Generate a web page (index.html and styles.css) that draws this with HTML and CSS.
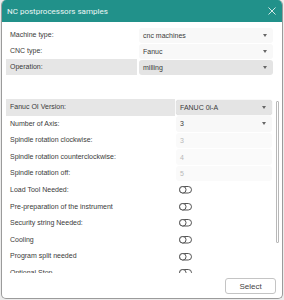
FILE: index.html
```html
<!DOCTYPE html>
<html lang="en">
<head>
    <meta charset="UTF-8">
    <meta name="viewport" content="width=device-width, initial-scale=1.0">
    <title>NC postprocessors samples</title>
    <link rel="stylesheet" href="styles.css">
</head>
<body>
    <div class="dialog">
        <div class="titlebar">
            <span class="title">NC postprocessors samples</span>
            <svg class="close" width="8" height="8" viewBox="0 0 8 8">
                <path d="M0.5 0.5 L7.5 7.5 M7.5 0.5 L0.5 7.5" stroke="#e6f3f1" stroke-width="0.9" fill="none"/>
            </svg>
        </div>

        <div class="content">
            <div class="main-form">
                <div class="label">Machine type:</div>
                <div class="select"><span>cnc machines</span><i class="caret"></i></div>

                <div class="label">CNC type:</div>
                <div class="select"><span>Fanuc</span><i class="caret"></i></div>

                <div class="label active">Operation:</div>
                <div class="select active"><span>milling</span><i class="caret"></i></div>
            </div>

            <div class="params">
                <div class="params-list">
                    <div class="label active">Fanuc OI Version:</div>
                    <div class="select active raised"><span>FANUC 0i-A</span><i class="caret"></i></div>

                    <div class="label">Number of Axis:</div>
                    <div class="select"><span>3</span><i class="caret"></i></div>

                    <div class="label">Spindle rotation clockwise:</div>
                    <div class="select disabled"><span>3</span></div>

                    <div class="label">Spindle rotation counterclockwise:</div>
                    <div class="select disabled"><span>4</span></div>

                    <div class="label">Spindle rotation off:</div>
                    <div class="select disabled"><span>5</span></div>

                    <div class="label">Load Tool Needed:</div>
                    <div class="toggle-cell"><svg class="toggle" width="14" height="8" viewBox="0 0 14 8"><rect x="0.5" y="0.5" width="12" height="6.5" rx="3.25" fill="#fff" stroke="#555"/><circle cx="3.8" cy="3.75" r="3.25" fill="#fff" stroke="#555"/></svg></div>

                    <div class="label">Pre-preparation of the instrument</div>
                    <div class="toggle-cell"><svg class="toggle" width="14" height="8" viewBox="0 0 14 8"><rect x="0.5" y="0.5" width="12" height="6.5" rx="3.25" fill="#fff" stroke="#555"/><circle cx="3.8" cy="3.75" r="3.25" fill="#fff" stroke="#555"/></svg></div>

                    <div class="label">Security string Needed:</div>
                    <div class="toggle-cell"><svg class="toggle" width="14" height="8" viewBox="0 0 14 8"><rect x="0.5" y="0.5" width="12" height="6.5" rx="3.25" fill="#fff" stroke="#555"/><circle cx="3.8" cy="3.75" r="3.25" fill="#fff" stroke="#555"/></svg></div>

                    <div class="label">Cooling</div>
                    <div class="toggle-cell"><svg class="toggle" width="14" height="8" viewBox="0 0 14 8"><rect x="0.5" y="0.5" width="12" height="6.5" rx="3.25" fill="#fff" stroke="#555"/><circle cx="3.8" cy="3.75" r="3.25" fill="#fff" stroke="#555"/></svg></div>

                    <div class="label">Program split needed</div>
                    <div class="toggle-cell"><svg class="toggle" width="14" height="8" viewBox="0 0 14 8"><rect x="0.5" y="0.5" width="12" height="6.5" rx="3.25" fill="#fff" stroke="#555"/><circle cx="3.8" cy="3.75" r="3.25" fill="#fff" stroke="#555"/></svg></div>

                    <div class="label">Optional Stop</div>
                    <div class="toggle-cell"><svg class="toggle" width="14" height="8" viewBox="0 0 14 8"><rect x="0.5" y="0.5" width="12" height="6.5" rx="3.25" fill="#fff" stroke="#555"/><circle cx="3.8" cy="3.75" r="3.25" fill="#fff" stroke="#555"/></svg></div>
                </div>
                <div class="scrollbar"><div class="thumb"></div></div>
            </div>
        </div>

        <div class="footer">
            <button class="btn">Select</button>
        </div>
    </div>
</body>
</html>
```

FILE: styles.css
```css
body {
    margin: 0;
    background-color: #ececec;
    font-family: "Liberation Sans", Arial, sans-serif;
    color: #333;
}
.dialog {
    box-sizing: border-box;
    width: 282px;
    height: 299px;
    margin-left: 1px;
    border: 1px solid #9b9b9b;
    border-top: none;
    border-radius: 5px;
    background-color: #fff;
    overflow: hidden;
    display: flex;
    flex-direction: column;
}
.titlebar {
    height: 22px;
    flex: none;
    background-color: #21918a;
    display: flex;
    align-items: center;
    justify-content: space-between;
    padding: 0 6px 0 5px;
}
.title {
    color: #eef7f6;
    font-family: Roboto, "Liberation Sans", sans-serif;
    font-size: 8px;
}
.close {
    margin-top: -1px;
}
.content {
    flex: 1;
    padding: 5px 0 0 4px;
    min-height: 0;
}
.main-form {
    display: grid;
    grid-template-columns: 131px 134px;
    grid-auto-rows: 16px;
    column-gap: 2px;
    margin-bottom: 24px;
}
.label {
    font-size: 7px;
    line-height: 16px;
    padding-left: 4px;
    white-space: nowrap;
    color: #3a3a3a;
}
.label.active {
    background-color: #e6e6e6;
}
.select {
    font-size: 7px;
    display: flex;
    align-items: center;
    justify-content: space-between;
    padding: 0 6px 0 4px;
    background-color: #f8f8f8;
    border-radius: 3px;
    color: #3a3a3a;
    margin: 0.5px 0;
}
.select.active {
    background-color: #e4e4e4;
}
.select.raised {
    box-shadow: 0 0 1px rgba(0, 0, 0, 0.25);
}
.select.disabled {
    color: #b8b8b8;
    background-color: #fafafa;
}
.caret {
    width: 0;
    height: 0;
    border-left: 2.5px solid transparent;
    border-right: 2.5px solid transparent;
    border-top: 3px solid #666;
}
.params {
    height: 174px;
    display: flex;
    overflow: hidden;
}
.params-list {
    flex: 1;
    display: grid;
    grid-template-columns: 169px 96px;
    grid-auto-rows: 16.6px;
    column-gap: 1px;
    align-content: start;
}
.params-list .label {
    line-height: 16.6px;
}
.toggle-cell {
    display: flex;
    align-items: center;
    padding-left: 3px;
}
.scrollbar {
    width: 9px;
    flex: none;
}
.thumb {
    box-sizing: border-box;
    width: 3px;
    height: 142px;
    margin: 2px 0 0 3px;
    border: 1px solid #b8b8b8;
    border-radius: 1px;
}
.footer {
    flex: none;
    display: flex;
    justify-content: flex-end;
    padding: 5px 6px 4px 0;
}
.btn {
    width: 51px;
    height: 16px;
    padding: 0;
    font-family: "Liberation Sans", Arial, sans-serif;
    font-size: 8px;
    color: #444;
    background-color: #fff;
    border: 1px solid #c4c4c4;
    border-radius: 3px;
}
```
